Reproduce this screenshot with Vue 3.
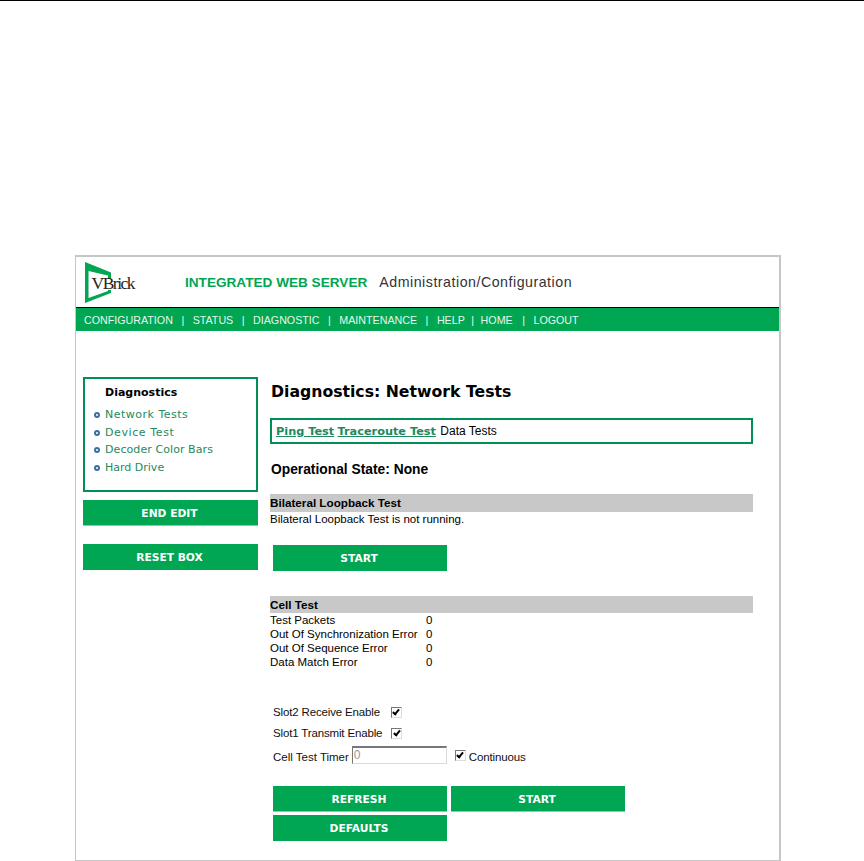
<script setup>
const nav = [
  { label: 'CONFIGURATION' },
  { label: 'STATUS' },
  { label: 'DIAGNOSTIC' },
  { label: 'MAINTENANCE' },
  { label: 'HELP' },
  { label: 'HOME', tight: true },
  { label: 'LOGOUT', loose: true }
]
const side = [
  { label: 'Network Tests', track: 0.5 },
  { label: 'Device Test', track: 0.6 },
  { label: 'Decoder Color Bars', track: 0.08 },
  { label: 'Hard Drive', track: 0 }
]
const stats = [['Test Packets', 0], ['Out Of Synchronization Error', 0], ['Out Of Sequence Error', 0], ['Data Match Error', 0]]
</script>

<template>
  <div class="page">
    <div class="rule"></div>
    <div class="frame">
      <header class="head">
        <svg class="logo" width="52" height="42" viewBox="0 0 52 42">
          <path d="M0 0 L26 10.5 V31 L0 41 Z M3.5 9 V36 L23 29 V13.5 Z" fill="#00a651" fill-rule="evenodd"/>
          <rect x="6" y="17" width="24" height="11" fill="#fff"/>
          <text x="6.5" y="27" class="logotext">VBrick</text>
        </svg>
        <span class="title">INTEGRATED WEB SERVER</span>
        <span class="sub">Administration/Configuration</span>
      </header>
      <nav class="nav">
        <template v-for="(n, i) in nav" :key="n.label">
          <span v-if="i" class="sep" :class="{ tight: n.tight, loose: n.loose }">|</span>
          <span :class="{ tight: n.tight }">{{ n.label }}</span>
        </template>
      </nav>
      <div class="body">
        <aside class="side">
          <div class="menu">
            <div class="menuhead">Diagnostics</div>
            <div v-for="s in side" :key="s.label" class="menuitem" :style="{ letterSpacing: s.track + 'px' }"><i class="dot"></i>{{ s.label }}</div>
          </div>
          <div class="btn wide b1 edge">END EDIT</div>
          <div class="btn wide b2">RESET BOX</div>
        </aside>
        <main class="main">
          <h1>Diagnostics: Network Tests</h1>
          <div class="tabs"><a>Ping Test</a> <a>Traceroute Test</a> <span>Data Tests</span></div>
          <h2>Operational State: None</h2>
          <div class="bar">Bilateral Loopback Test</div>
          <div class="line">Bilateral Loopback Test is not running.</div>
          <div class="btn inset start1">START</div>
          <div class="bar cell">Cell Test</div>
          <div v-for="r in stats" :key="r[0]" class="stat"><span class="statl">{{ r[0] }}</span><span>{{ r[1] }}</span></div>
          <div class="opt o1"><span class="nar">Slot2 Receive Enable</span><span class="cb"></span></div>
          <div class="opt o2"><span class="nar">Slot1 Transmit Enable</span><span class="cb"></span></div>
          <div class="opt o3">
            <span class="low">Cell Test Timer</span>
            <span class="input">0</span>
            <span class="cb c3"></span>
            <span class="cont low nar">Continuous</span>
          </div>
          <div class="btnrow r1"><div class="btn edge">REFRESH</div><div class="btn edge">START</div></div>
          <div class="btnrow r2"><div class="btn">DEFAULTS</div></div>
        </main>
      </div>
    </div>
  </div>
</template>

<style>
html, body { margin: 0; background: #fff; }
</style>

<style scoped>
.page { width: 864px; height: 861px; overflow: hidden; font-family: "Liberation Sans", Arial, sans-serif; color: #000; }
.rule { height: 1px; background: #000; }
.frame { margin: 254px 0 0 75px; width: 703px; height: 603px; border: 2px solid #c6c6c6; border-left-width: 1px; }
.head { height: 50px; display: flex; align-items: flex-start; border-bottom: 1px solid #000; }
.logo { margin: 5px 0 0 9px; flex: none; }
.logotext { font-family: "Liberation Serif", serif; font-size: 17.5px; letter-spacing: -1.5px; fill: #2b2320; }
.title { margin: 17px 0 0 48px; font-size: 13.6px; line-height: 18px; font-weight: 700; color: #00a651; white-space: nowrap; }
.sub { margin: 16px 0 0 12px; font-size: 14.2px; line-height: 18px; letter-spacing: 0.52px; color: #333; white-space: nowrap; }
.nav { height: 23px; background: #00a651; color: #e9f7ef; font-size: 10.7px; display: flex; align-items: center; gap: 8.5px; padding-left: 8px; white-space: nowrap; }
.nav .tight { margin-left: -2px; }
.nav .loose { margin-left: 1px; }
.body { display: flex; }
.side { width: 175px; margin: 46px 0 0 7px; flex: none; }
.menu { border: 2px solid #009056; padding-top: 7px; width: 171px; height: 104px; }
.menuhead { font-family: "DejaVu Sans", Verdana, sans-serif; font-size: 11px; font-weight: 700; padding-left: 20px; height: 20px; line-height: 13px; }
.menuitem { font-family: "DejaVu Sans", Verdana, sans-serif; font-size: 11px; color: #1d8a5f; height: 17.6px; line-height: 17px; padding-left: 20px; position: relative; }
.dot { position: absolute; left: 9px; top: 6px; width: 2px; height: 2px; border: 2px solid #3b6ea5; border-radius: 50%; }
.btn { background: #00a651; color: #fff; font-family: "DejaVu Sans", Verdana, sans-serif; font-size: 10.7px; font-weight: 700; height: 26px; line-height: 27px; text-align: center; width: 174px; box-sizing: border-box; padding-right: 2px; }
.edge { box-shadow: inset 0 -1px 0 #7fd2a8; }
.wide { width: 175px; }
.b1 { margin-top: 8px; }
.b2 { margin-top: 18px; }
.main { margin: 46px 0 0 12px; width: 483px; font-size: 11.5px; }
h1 { font-family: "DejaVu Sans", Verdana, sans-serif; font-size: 15.7px; font-weight: 700; margin: 5px 0 0 0; padding-left: 1px; line-height: 20px; height: 20px; white-space: nowrap; }
.tabs { margin-top: 16px; height: 22px; border: 2px solid #009056; line-height: 23px; padding-left: 4px; font-size: 12px; }
.tabs a { font-family: "DejaVu Sans", Verdana, sans-serif; font-weight: 700; font-size: 11.3px; color: #1d8a5f; text-decoration: underline; }
.tabs span { margin-left: 1px; }
h2 { font-size: 13.8px; font-weight: 700; margin: 17px 0 -1px 0; padding-left: 1px; line-height: 18px; }
.bar { background: #c8c8c8; height: 18px; line-height: 18px; font-weight: 700; font-size: 11.7px; margin-top: 16px; }
.line { line-height: 16px; height: 16px; margin-top: -1px; }
.inset { margin: 18px 0 0 3px; }
.cell { margin-top: 25px; height: 17px; line-height: 17px; }
.stat { display: flex; height: 14px; line-height: 14px; }
.statl { width: 156px; }
.opt { display: flex; align-items: center; margin-left: 3px; color: #111; white-space: nowrap; }
.nar { letter-spacing: -0.15px; }
.o1 { margin-top: 33px; height: 20px; }
.o2 { margin-top: 1px; height: 20px; }
.o3 { margin-top: 1px; height: 22px; }
.low { position: relative; top: 2px; }
.cb { width: 9px; height: 9px; border: 1px solid #ddd; border-top-color: #777; border-left-color: #777; margin-left: 11px; position: relative; background: #fff; flex: none; }
.cb::after { content: ""; position: absolute; left: 2.5px; top: 0; width: 2px; height: 5px; border: solid #000; border-width: 0 2px 2px 0; transform: rotate(40deg); }
.o2 .cb { margin-left: 9px; }
.input { width: 92px; height: 15px; margin-left: 3px; border: 1px solid #dcdcd4; border-top: 2px solid #777; border-left-color: #777; color: #999; line-height: 15px; padding-left: 1px; font-size: 12px; }
.opt .c3 { margin-left: 8px; }
.cont { margin-left: 3px; }
.btnrow { display: flex; gap: 4px; margin-left: 3px; }
.r1 { margin-top: 20px; }
.r2 { margin-top: 3px; }
</style>
